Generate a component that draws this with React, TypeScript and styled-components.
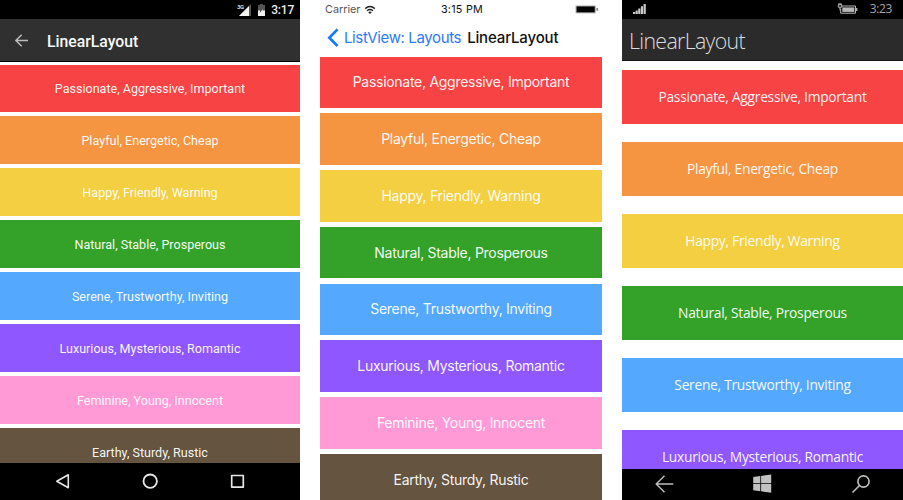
import React from 'react';
import styled, { createGlobalStyle } from 'styled-components';

const GlobalStyle = createGlobalStyle`
  * { box-sizing: border-box; }
  html, body { margin: 0; background: #fff; overflow: hidden; }
  svg { display: block; flex: none; }
`;

const items = [
  { label: 'Passionate, Aggressive, Important', color: '#f74343' },
  { label: 'Playful, Energetic, Cheap', color: '#f59542' },
  { label: 'Happy, Friendly, Warning', color: '#f4cf42' },
  { label: 'Natural, Stable, Prosperous', color: '#34a229' },
  { label: 'Serene, Trustworthy, Inviting', color: '#54a9ff' },
  { label: 'Luxurious, Mysterious, Romantic', color: '#8f57ff' },
  { label: 'Feminine, Young, Innocent', color: '#ff9ad6' },
  { label: 'Earthy, Sturdy, Rustic', color: '#645440' },
];

const Stage = styled.main`
  display: grid;
  grid-template-columns: 300px 282px 281px;
  column-gap: 20px;
  width: 903px;
  height: 500px;
  background: #fff;
`;

const Phone = styled.section<{ $font: string }>`
  display: flex;
  flex-direction: column;
  min-width: 0;
  height: 500px;
  overflow: hidden;
  font-family: ${p => p.$font};
  white-space: nowrap;
`;

const List = styled.div<{ $gap: number; $top: number }>`
  display: flex;
  flex: 1;
  min-height: 0;
  flex-direction: column;
  gap: ${p => p.$gap}px;
  padding-top: ${p => p.$top}px;
  overflow: hidden;
  background: #fff;
`;

const Row = styled.div<{ $color: string; $height: number }>`
  display: flex;
  flex: none;
  align-items: center;
  justify-content: center;
  height: ${p => p.$height}px;
  background: ${p => p.$color};
  color: rgba(255, 255, 255, 0.96);
`;

const AndroidLabel = styled.span`
  font-size: 12.55px;
  line-height: 16px;
  padding-top: 1px;
`;

const IosLabel = styled.span`
  font-size: 14px;
  letter-spacing: -0.28px;
  line-height: 18px;
`;

const WindowsLabel = styled.span`
  font-size: 13.8px;
  letter-spacing: -0.28px;
  line-height: 18px;
`;

const DarkStatus = styled.div<{ $right: number }>`
  display: flex;
  flex: none;
  align-items: center;
  height: 18.5px;
  padding-right: ${p => p.$right}px;
  background: #000;
`;

const AndroidClock = styled.span`
  margin-left: 4px;
  padding-top: 1px;
  color: #eee;
  font-size: 12px;
  letter-spacing: -0.2px;
  font-weight: 500;
  line-height: 16px;
`;

const AndroidBar = styled.header`
  display: flex;
  flex: none;
  align-items: center;
  gap: 18px;
  height: 43.5px;
  padding: 2px 0 0 14px;
  background: #303030;
  border-bottom: 1px solid #050505;
`;

const AndroidTitle = styled.h1`
  margin: 0;
  padding-top: 2px;
  color: #f8f8f8;
  font-size: 15.75px;
  font-weight: 500;
  line-height: 20px;
`;

const AndroidNav = styled.nav`
  display: flex;
  flex: none;
  align-items: center;
  justify-content: space-between;
  height: 37.5px;
  padding: 0 54px;
  background: #000;
`;

const IosStatus = styled.div`
  display: grid;
  grid-template-columns: 1fr auto 1fr;
  flex: none;
  align-items: center;
  height: 19px;
  padding: 0 3px 0 5px;
  color: #111;
  font-size: 10.8px;
  line-height: 14px;
`;

const Carrier = styled.div`
  display: flex;
  align-items: center;
  gap: 4px;
  color: #555;
`;

const IosClock = styled.span`
  letter-spacing: 0.25px;
`;

const IosBattery = styled.div`
  display: flex;
  justify-content: flex-end;
`;

const IosBar = styled.header`
  display: flex;
  flex: none;
  align-items: center;
  height: 37.5px;
  padding: 0 0 0 7px;
  font-size: 15px;
  line-height: 20px;
`;

const BackLink = styled.span`
  margin-left: 5px;
  color: #2b7cf6;
  letter-spacing: -0.37px;
`;

const IosTitle = styled.h1`
  margin: 0 0 0 6px;
  color: #111;
  font-size: 15px;
  font-weight: 500;
  letter-spacing: -0.15px;
`;

const Spacer = styled.div`
  flex: 1;
`;

const WindowsClock = styled.span`
  margin-left: 12px;
  color: #a5a5a5;
  font-size: 12px;
  letter-spacing: -0.35px;
  line-height: 16px;
`;

const WindowsBar = styled.header`
  display: flex;
  flex: none;
  align-items: center;
  height: 42.5px;
  padding-left: 7px;
  background: #2b2b2b;
  border-bottom: 1.5px solid #151515;
`;

const WindowsTitle = styled.h1`
  margin: 0;
  padding-top: 3px;
  color: #dedede;
  font-size: 21.3px;
  font-weight: 300;
  letter-spacing: -0.65px;
  line-height: 26px;
`;

const WindowsNav = styled.nav`
  display: flex;
  flex: none;
  align-items: flex-start;
  justify-content: space-between;
  height: 31.5px;
  padding: 5px 32px 0 33px;
  background: #000;
`;

function AndroidPhone() {
  return (
    <Phone $font='Roboto, sans-serif'>
      <DarkStatus $right={6}>
        <Spacer />
        <svg width="30" height="16" viewBox="0 0 30 16">
          <path d="M14 3v12H2z" fill="#555" />
          <path d="M12 5v10H2z" fill="#f2f2f2" />
          <text x="0" y="7.5" fill="#ddd" fontFamily="Roboto" fontSize="6" fontWeight="700" letterSpacing="-.5">3G</text>
          <path d="M21 4h2V3h3v1h2v11h-7z" fill="#555" />
          <path d="M21 9.5h2.2L22.6 12l3.4-4-.5 1.5H28V15h-7z" fill="#f2f2f2" />
        </svg>
        <AndroidClock>3:17</AndroidClock>
      </DarkStatus>
      <AndroidBar>
        <svg width="15" height="15" viewBox="0 0 15 15" fill="none" stroke="#bcbcbc" strokeWidth="1.5">
          <path d="M14 7.5H2M7.7 1.7 1.9 7.5l5.8 5.8" />
        </svg>
        <AndroidTitle>LinearLayout</AndroidTitle>
      </AndroidBar>
      <List $gap={4.4} $top={2.5}>
        {items.map(item => (
          <Row key={item.label} $color={item.color} $height={47.6}>
            <AndroidLabel>{item.label}</AndroidLabel>
          </Row>
        ))}
      </List>
      <AndroidNav>
        <svg width="17" height="17" viewBox="0 0 17 17" fill="none" stroke="#e6e6e6" strokeWidth="1.6" strokeLinejoin="round">
          <path d="M14.3 1.8v13L2.8 8.3z" />
        </svg>
        <svg width="17" height="17" viewBox="0 0 17 17" fill="none" stroke="#e6e6e6" strokeWidth="1.8">
          <circle cx="8.2" cy="8.2" r="6.7" />
        </svg>
        <svg width="17" height="17" viewBox="0 0 17 17" fill="none" stroke="#e6e6e6" strokeWidth="1.7" strokeLinejoin="round">
          <path d="M2.7 2.5h11.6v11.6H2.7z" />
        </svg>
      </AndroidNav>
    </Phone>
  );
}

function IosPhone() {
  return (
    <Phone $font='Inter, sans-serif'>
      <IosStatus>
        <Carrier>
          Carrier
          <svg width="12" height="10" viewBox="0 0 12 10" fill="none" stroke="#222" strokeWidth="1.4">
            <path d="M1.2 3.6Q6-.5 10.8 3.6M3 5.7Q6 3.3 9 5.7" />
            <path d="m6 9-1.8-1.8Q6 5.9 7.8 7.2z" fill="#222" stroke="none" />
          </svg>
        </Carrier>
        <IosClock>3:15 PM</IosClock>
        <IosBattery>
          <svg width="24" height="9" viewBox="0 0 24 9">
            <rect x=".3" y=".3" width="20.7" height="8.2" rx="1" fill="#c4c6c5" />
            <rect x="1.5" y="1.4" width="18.3" height="6" fill="#050505" />
            <path d="M21.6 3h1v2.8h-1z" fill="#333" />
          </svg>
        </IosBattery>
      </IosStatus>
      <IosBar>
        <svg width="12" height="20" viewBox="0 0 12 20" fill="none" stroke="#147aff" strokeWidth="2.7">
          <path d="m10.5 1.4-8.2 8.3 8.2 8.3" />
        </svg>
        <BackLink>ListView: Layouts</BackLink>
        <IosTitle>LinearLayout</IosTitle>
      </IosBar>
      <List $gap={5.3} $top={0}>
        {items.map(item => (
          <Row key={item.label} $color={item.color} $height={51.5}>
            <IosLabel>{item.label}</IosLabel>
          </Row>
        ))}
      </List>
    </Phone>
  );
}

function WindowsPhone() {
  return (
    <Phone $font='"Open Sans", "Noto Sans", sans-serif'>
      <DarkStatus $right={11}>
        <svg width="25" height="12" viewBox="0 0 25 12" fill="#c8c8c8">
          <path d="M11 9h2.2v2H11zM13.6 7.5h2.2V11h-2.2zM16.2 5.5h2.2V11h-2.2zM18.9 3.2h2.2V11h-2.2zM21.6 1h2.2v10h-2.2z" />
        </svg>
        <Spacer />
        <svg width="21" height="12" viewBox="0 0 21 12" fill="none" stroke="#b8b8b8">
          <path d="M5 3h13.5v7.2H3.7V6" />
          <path d="M5.3 4.4h12v4.5h-12z" fill="#b8b8b8" stroke="none" />
          <path d="M19.7 5v3" strokeWidth="1.3" />
          <circle cx="3" cy="3" r="1.9" fill="#333" />
          <path d="M2 0v2M4 0v2M3 5v2.5" />
        </svg>
        <WindowsClock>3:23</WindowsClock>
      </DarkStatus>
      <WindowsBar>
        <WindowsTitle>LinearLayout</WindowsTitle>
      </WindowsBar>
      <List $gap={18} $top={9}>
        {items.slice(0, 6).map(item => (
          <Row key={item.label} $color={item.color} $height={54}>
            <WindowsLabel>{item.label}</WindowsLabel>
          </Row>
        ))}
      </List>
      <WindowsNav>
        <svg width="20" height="20" viewBox="0 0 20 20" fill="none" stroke="#bdbdbd" strokeWidth="1.4">
          <path d="M18.3 10H1.2M9.5 1.8 1.2 10l8.3 8.2" />
        </svg>
        <svg width="20" height="20" viewBox="0.8 0.3 20 20" fill="#c2c2c2">
          <path d="m1 3.3 7.1-1v7.2H1zM8.9 2.2 19 .8v8.7H8.9zM1 10.3h7.1v7.2L1 16.5zM8.9 10.3H19V19L8.9 17.6z" />
        </svg>
        <svg width="20" height="20" viewBox="0 0 20 20" fill="none" stroke="#bdbdbd" strokeWidth="1.6">
          <circle cx="12.5" cy="7.5" r="5.6" />
          <path d="m8.5 11.5-7 7" />
        </svg>
      </WindowsNav>
    </Phone>
  );
}

export default function App() {
  return (
    <>
      <GlobalStyle />
      <Stage>
        <AndroidPhone />
        <IosPhone />
        <WindowsPhone />
      </Stage>
    </>
  );
}
